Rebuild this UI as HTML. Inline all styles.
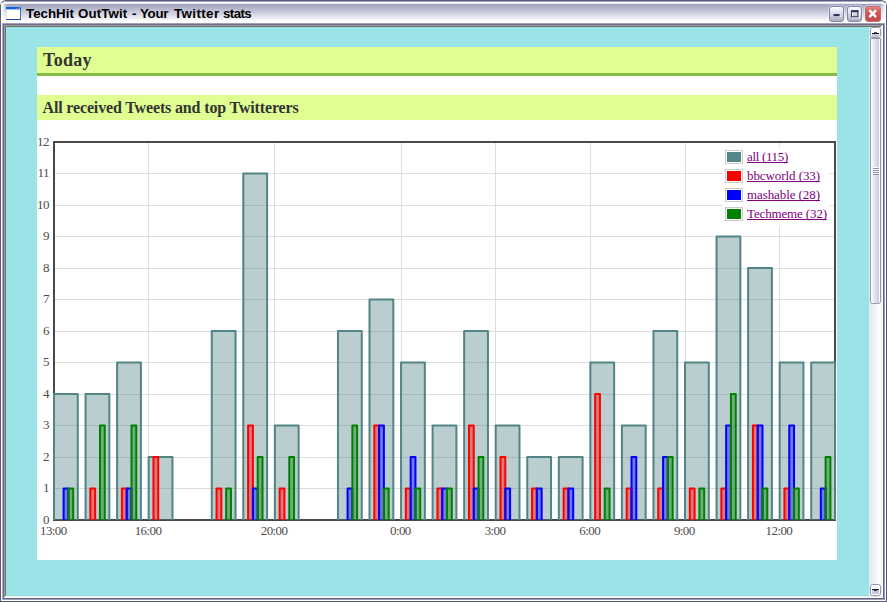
<!DOCTYPE html>
<html><head><meta charset="utf-8"><title>TechHit OutTwit - Your Twitter stats</title>
<style>
html,body{margin:0;padding:0;}
body{width:887px;height:602px;overflow:hidden;position:relative;background:#fff;font-family:"Liberation Serif",serif;}
.abs{position:absolute;}
#win{position:absolute;left:0;top:0;width:887px;height:602px;overflow:hidden;background:#fff;}
/* title bar */
#tb{position:absolute;left:0;top:0;width:885px;height:24px;border:1px solid #5c5c7c;border-bottom:none;
 background:linear-gradient(to bottom,#a2a2be 0.5px,#ffffff 1.5px,#e6e6ee 2.5px,#a6a7c1 3.5px,#a6a7c2 4.5px,#c0c2d4 9.5px,#dcdde8 14.5px,#fbfbfd 19.5px,#ffffff 20.5px,#ffffff 21.5px,#a0a0b8 22.5px,#6c6c8c 23.5px);
 border-radius:6px 6px 0 0;box-shadow:inset 1px 0 0 #fff, inset -1px 0 0 #fff;}
#tb:after{content:"";position:absolute;left:0;top:2px;width:885px;height:20px;background:linear-gradient(to right,rgba(255,255,255,0.95) 0px,rgba(255,255,255,0.75) 2px,rgba(255,255,255,0) 6px,rgba(255,255,255,0) 879px,rgba(255,255,255,0.75) 883px,rgba(255,255,255,0.95) 885px);}
.tw{position:absolute;top:6px;font:bold 13.33px/16px "Liberation Sans",sans-serif;color:#000;white-space:nowrap;}
.btn{position:absolute;top:6px;width:13px;height:14px;border:1px solid #8486a8;border-radius:3px;
 background:linear-gradient(to bottom,#fdfdfe 0%,#e4e5ee 35%,#b9bbd0 80%,#a9abc4 100%);box-shadow:0 0 0 1px rgba(255,255,255,0.35);}
#bclose{width:14px;border-color:#c26a6a;background:linear-gradient(to bottom,#e08a80 0%,#d45f5c 30%,#c94c4c 70%,#c65050 100%);}
/* frame */
.v{position:absolute;top:24px;width:1px;height:578px;}
.h{position:absolute;height:1px;}
#client{position:absolute;left:6px;top:27px;width:875px;height:569px;background:#9AE4E8;overflow:hidden;}
/* scrollbar */
#sb{position:absolute;left:863px;top:0;width:12px;height:569px;background:linear-gradient(to right,#eceaf0 0px,#e9e9f1 2px,#f4f4f8 6px,#ffffff 10px,#ffffff 12px);}
.sbb{position:absolute;left:1px;width:9px;border:1px solid #9496b0;border-radius:2.5px;background:#fff;}
#thumb{position:absolute;left:1px;top:11px;width:9px;height:264px;border:1px solid #9496b0;border-radius:0 0 2.5px 2.5px;
 background:linear-gradient(to right,#ffffff 0px,#ffffff 1px,#f2f2f6 1.5px,#dcdde8 5px,#c8cadc 8px,#ffffff 8.2px,#ffffff 9px);}
/* content */
#panel{position:absolute;left:31px;top:20px;width:800px;height:513px;background:#fff;}
h1,h2{margin:0;position:absolute;left:0;width:794px;padding-left:6px;background:#E0FF92;color:#333;font-weight:bold;white-space:nowrap;}
h1{top:0;height:26px;border-bottom:3px solid #87BC44;font-size:18px;line-height:27px;letter-spacing:0.3px;}
h2{top:48px;height:25px;font-size:16px;line-height:26px;letter-spacing:-0.15px;padding-left:5.5px;width:794.5px;}
#ph{position:absolute;left:0;top:93px;width:800px;height:400px;font-size:13px;color:#4c4c4c;line-height:15px;}
svg.plot{position:absolute;left:0;top:0;}
.yl{position:absolute;left:0;width:12px;text-align:right;height:15px;letter-spacing:-0.5px;margin-top:-1px;white-space:nowrap;}
.xl{position:absolute;top:383px;width:60px;text-align:center;height:15px;letter-spacing:-0.6px;margin-left:-0.7px;}
#legbg{position:absolute;left:685px;top:7px;width:108px;height:80px;background:#fff;opacity:0.85;}
#leg{position:absolute;left:685px;top:7px;width:108px;height:80px;}
.lr{position:absolute;left:0;height:19px;white-space:nowrap;}
.lb{position:absolute;left:3px;top:3px;width:14px;height:10px;border:1px solid #ccc;padding:1px;}
.lb i{display:block;width:14px;height:10px;}
.lt{position:absolute;left:25px;top:2px;color:#800080;text-decoration:underline;text-decoration-skip-ink:none;text-underline-offset:1px;text-decoration-thickness:1px;font-size:13px;line-height:15px;}
</style></head><body>
<div id="win">
 <div id="tb"></div>
 <svg class="abs" style="left:6px;top:7px" width="15" height="13" viewBox="0 0 15 13"><rect x="0" y="0" width="15" height="13" fill="#fffffb"/><rect x="0" y="0" width="15" height="2.4" fill="#0f63dc"/><rect x="14" y="2" width="1" height="11" fill="#3f6fc8"/><rect x="0" y="12" width="15" height="1" fill="#1b4ba6"/><rect x="0" y="2" width="0.6" height="10" fill="#c8d4ec"/><rect x="13" y="1" width="1" height="1" fill="#f07828"/><rect x="13" y="0" width="1" height="1" fill="#7098e0"/><rect x="10.6" y="1" width="1" height="0.8" fill="#9cc0f0"/></svg>
 <span class="tw" id="w1" style="left:26px">TechHit</span><span class="tw" id="w2" style="left:78px;letter-spacing:0.1px">OutTwit</span><span class="tw" id="w3" style="left:132px">-</span><span class="tw" id="w4" style="left:140px;letter-spacing:-0.3px">Your</span><span class="tw" id="w5" style="left:174px;letter-spacing:0.4px">Twitter</span><span class="tw" id="w6" style="left:223px;letter-spacing:-0.6px">stats</span>
 <div class="btn" style="left:829px"><svg width="13" height="13" viewBox="0 0 13 13" style="position:absolute;left:0;top:-0.3px"><rect x="4" y="8.4" width="7" height="1.4" fill="#fff"/><rect x="3.6" y="7" width="6" height="2.3" fill="#34345c"/></svg></div>
 <div class="btn" style="left:847px"><svg width="13" height="13" viewBox="0 0 13 13" style="position:absolute;left:0;top:-0.5px"><rect x="4.5" y="4.5" width="7" height="6.4" fill="none" stroke="#fff" stroke-width="1"/><rect x="3.5" y="3.8" width="6.4" height="6" fill="none" stroke="#34345c" stroke-width="1"/><rect x="3" y="3.3" width="7.4" height="2" fill="#34345c"/></svg></div>
 <div class="btn" id="bclose" style="left:865px"><svg width="14" height="13" viewBox="0 0 14 13" style="position:absolute;left:0;top:0"><path d="M3.3 3.1L10.1 10.1M10.1 3.1L3.3 10.1" stroke="#fff" stroke-width="2.4" fill="none"/></svg></div>
 <!-- frame lines -->
 <div class="v" style="left:0;background:#58587a"></div><div class="v" style="left:1px;background:#fff"></div><div class="v" style="left:2px;background:#a9a9c4"></div><div class="v" style="left:3px;background:#6b6b87"></div>
 <div class="v" style="left:886px;background:#56566f"></div><div class="v" style="left:885px;background:#fff"></div><div class="v" style="left:884px;background:#9c9cb6"></div><div class="v" style="left:883px;background:#646480"></div>
 <div class="h" style="top:601px;left:0;width:887px;background:#56566f"></div><div class="h" style="top:600px;left:1px;width:885px;background:#fff"></div><div class="h" style="top:599px;left:2px;width:883px;background:#a0a0bc"></div><div class="h" style="top:598px;left:3px;width:881px;background:#5f5f7c"></div>
 <!-- sunken edge -->
 <div class="h" style="top:25px;left:4px;width:879px;background:#a0a0a6"></div><div class="h" style="top:26px;left:5px;width:877px;background:#716f64"></div>
 <div class="v" style="left:4px;top:25px;height:573px;background:#9d9da0"></div><div class="v" style="left:5px;top:26px;height:571px;background:#74726b"></div>
 <div class="v" style="left:882px;top:25px;height:573px;background:#fff"></div><div class="v" style="left:881px;top:26px;height:571px;background:#ecebe6"></div>
 <div class="h" style="top:597px;left:4px;width:879px;background:#fff"></div><div class="h" style="top:596px;left:5px;width:877px;background:#ece6e6"></div>
 <div id="client">
 <div id="panel">
   <h1>Today</h1>
   <h2>All received Tweets and top Twitterers</h2>
   <div id="ph">
    <svg class="plot" width="800" height="400" viewBox="0 0 800 400"><g stroke="#dddddd" stroke-width="1" shape-rendering="auto"><line x1="17" x2="798" y1="348.50" y2="348.50"/><line x1="17" x2="798" y1="317.50" y2="317.50"/><line x1="17" x2="798" y1="285.50" y2="285.50"/><line x1="17" x2="798" y1="254.50" y2="254.50"/><line x1="17" x2="798" y1="222.50" y2="222.50"/><line x1="17" x2="798" y1="191.50" y2="191.50"/><line x1="17" x2="798" y1="159.50" y2="159.50"/><line x1="17" x2="798" y1="128.50" y2="128.50"/><line x1="17" x2="798" y1="96.50" y2="96.50"/><line x1="17" x2="798" y1="65.50" y2="65.50"/><line x1="17" x2="798" y1="33.50" y2="33.50"/><line y1="2" y2="380" x1="111.50" x2="111.50"/><line y1="2" y2="380" x1="237.50" x2="237.50"/><line y1="2" y2="380" x1="364.50" x2="364.50"/><line y1="2" y2="380" x1="458.50" x2="458.50"/><line y1="2" y2="380" x1="553.50" x2="553.50"/><line y1="2" y2="380" x1="648.50" x2="648.50"/><line y1="2" y2="380" x1="742.50" x2="742.50"/></g><rect x="17" y="2" width="781" height="378" fill="none" stroke="#484848" stroke-width="2"/><g fill="rgba(82,132,134,0.4)" stroke="rgb(82,132,134)" stroke-width="2" stroke-linejoin="round" stroke-linecap="butt"><path d="M17.00 380V254.00H40.80V380" /><path d="M48.55 380V254.00H72.35V380" /><path d="M80.10 380V222.50H103.90V380" /><path d="M111.65 380V317.00H135.45V380" /><path d="M174.75 380V191.00H198.55V380" /><path d="M206.30 380V33.50H230.10V380" /><path d="M237.85 380V285.50H261.65V380" /><path d="M300.95 380V191.00H324.75V380" /><path d="M332.50 380V159.50H356.30V380" /><path d="M364.05 380V222.50H387.85V380" /><path d="M395.60 380V285.50H419.40V380" /><path d="M427.15 380V191.00H450.95V380" /><path d="M458.70 380V285.50H482.50V380" /><path d="M490.25 380V317.00H514.05V380" /><path d="M521.80 380V317.00H545.60V380" /><path d="M553.35 380V222.50H577.15V380" /><path d="M584.90 380V285.50H608.70V380" /><path d="M616.45 380V191.00H640.25V380" /><path d="M648.00 380V222.50H671.80V380" /><path d="M679.55 380V96.50H703.35V380" /><path d="M711.10 380V128.00H734.90V380" /><path d="M742.65 380V222.50H766.45V380" /><path d="M774.20 380V222.50H798.00V380" /></g><g fill="rgba(255,0,0,0.4)" stroke="#ff0000" stroke-width="2" stroke-linejoin="round" stroke-linecap="butt"><path d="M53.35 380V348.50H58.15V380" /><path d="M84.90 380V348.50H89.70V380" /><path d="M116.45 380V317.00H121.25V380" /><path d="M179.55 380V348.50H184.35V380" /><path d="M211.10 380V285.50H215.90V380" /><path d="M242.65 380V348.50H247.45V380" /><path d="M337.30 380V285.50H342.10V380" /><path d="M368.85 380V348.50H373.65V380" /><path d="M400.40 380V348.50H405.20V380" /><path d="M431.95 380V285.50H436.75V380" /><path d="M463.50 380V317.00H468.30V380" /><path d="M495.05 380V348.50H499.85V380" /><path d="M526.60 380V348.50H531.40V380" /><path d="M558.15 380V254.00H562.95V380" /><path d="M589.70 380V348.50H594.50V380" /><path d="M621.25 380V348.50H626.05V380" /><path d="M652.80 380V348.50H657.60V380" /><path d="M684.35 380V348.50H689.15V380" /><path d="M715.90 380V285.50H720.70V380" /><path d="M747.45 380V348.50H752.25V380" /></g><g fill="rgba(0,0,255,0.4)" stroke="#0000ff" stroke-width="2" stroke-linejoin="round" stroke-linecap="butt"><path d="M26.60 380V348.50H31.40V380" /><path d="M89.70 380V348.50H94.50V380" /><path d="M215.90 380V348.50H220.70V380" /><path d="M310.55 380V348.50H315.35V380" /><path d="M342.10 380V285.50H346.90V380" /><path d="M373.65 380V317.00H378.45V380" /><path d="M405.20 380V348.50H410.00V380" /><path d="M436.75 380V348.50H441.55V380" /><path d="M468.30 380V348.50H473.10V380" /><path d="M499.85 380V348.50H504.65V380" /><path d="M531.40 380V348.50H536.20V380" /><path d="M594.50 380V317.00H599.30V380" /><path d="M626.05 380V317.00H630.85V380" /><path d="M689.15 380V285.50H693.95V380" /><path d="M720.70 380V285.50H725.50V380" /><path d="M752.25 380V285.50H757.05V380" /><path d="M783.80 380V348.50H788.60V380" /></g><g fill="rgba(0,128,0,0.4)" stroke="#008000" stroke-width="2" stroke-linejoin="round" stroke-linecap="butt"><path d="M31.40 380V348.50H36.20V380" /><path d="M62.95 380V285.50H67.75V380" /><path d="M94.50 380V285.50H99.30V380" /><path d="M189.15 380V348.50H193.95V380" /><path d="M220.70 380V317.00H225.50V380" /><path d="M252.25 380V317.00H257.05V380" /><path d="M315.35 380V285.50H320.15V380" /><path d="M346.90 380V348.50H351.70V380" /><path d="M378.45 380V348.50H383.25V380" /><path d="M410.00 380V348.50H414.80V380" /><path d="M441.55 380V317.00H446.35V380" /><path d="M567.75 380V348.50H572.55V380" /><path d="M630.85 380V317.00H635.65V380" /><path d="M662.40 380V348.50H667.20V380" /><path d="M693.95 380V254.00H698.75V380" /><path d="M725.50 380V348.50H730.30V380" /><path d="M757.05 380V348.50H761.85V380" /><path d="M788.60 380V317.00H793.40V380" /></g></svg>
    <div class="yl" style="top:372.5px">0</div><div class="yl" style="top:341.0px">1</div><div class="yl" style="top:309.5px">2</div><div class="yl" style="top:278.0px">3</div><div class="yl" style="top:246.5px">4</div><div class="yl" style="top:215.0px">5</div><div class="yl" style="top:183.5px">6</div><div class="yl" style="top:152.0px">7</div><div class="yl" style="top:120.5px">8</div><div class="yl" style="top:89.0px">9</div><div class="yl" style="top:57.5px">10</div><div class="yl" style="top:26.0px">11</div><div class="yl" style="top:-5.5px">12</div><div class="xl" style="left:-13.0px">13:00</div><div class="xl" style="left:81.7px">16:00</div><div class="xl" style="left:207.8px">20:00</div><div class="xl" style="left:334.1px">0:00</div><div class="xl" style="left:428.7px">3:00</div><div class="xl" style="left:523.4px">6:00</div><div class="xl" style="left:618.0px">9:00</div><div class="xl" style="left:712.6px">12:00</div>
    <div id="legbg"></div>
    <div id="leg">
     <div class="lr" style="top:0px"><div class="lb"><i style="background:#558787"></i></div><span class="lt" style="letter-spacing:-0.33px">all (115)</span></div>
     <div class="lr" style="top:19px"><div class="lb"><i style="background:#ff0000"></i></div><span class="lt" style="letter-spacing:-0.08px">bbcworld (33)</span></div>
     <div class="lr" style="top:38px"><div class="lb"><i style="background:#0000ff"></i></div><span class="lt" style="letter-spacing:-0.08px">mashable (28)</span></div>
     <div class="lr" style="top:57px"><div class="lb"><i style="background:#008000"></i></div><span class="lt" style="letter-spacing:-0.14px">Techmeme (32)</span></div>
    </div>
   </div>
  </div>
  <div id="sb">
   <div class="sbb" style="top:0;height:9px"><svg width="9" height="9" viewBox="0 0 9 9" style="position:absolute;left:0;top:0"><rect x="1" y="6" width="7" height="3" fill="#c6c8da"/><rect x="1" y="5" width="7" height="1" fill="#1a1a28"/><rect x="3" y="4.2" width="3" height="1" fill="#33333f"/></svg></div>
   <div id="thumb"><svg width="10" height="10" viewBox="0 0 10 10" style="position:absolute;left:-1px;top:128px"><g fill="#8a8ea8"><rect x="3" y="1" width="6" height="1"/><rect x="3" y="3" width="6" height="1"/><rect x="3" y="5" width="6" height="1"/><rect x="3" y="7" width="6" height="1"/></g><g fill="#fff"><rect x="3" y="0" width="6" height="1"/><rect x="3" y="2" width="6" height="1"/><rect x="3" y="4" width="6" height="1"/><rect x="3" y="6" width="6" height="1"/></g></svg></div>
   <div class="sbb" style="top:557px;height:10px"><svg width="9" height="10" viewBox="0 0 9 10" style="position:absolute;left:0;top:0"><rect x="1" y="5" width="7" height="4" fill="#c6c8da"/><rect x="1" y="4" width="7" height="1" fill="#1a1a28"/><rect x="3" y="5" width="3" height="1" fill="#33333f"/></svg></div>
  </div>
 </div>
</div>
</body></html>
